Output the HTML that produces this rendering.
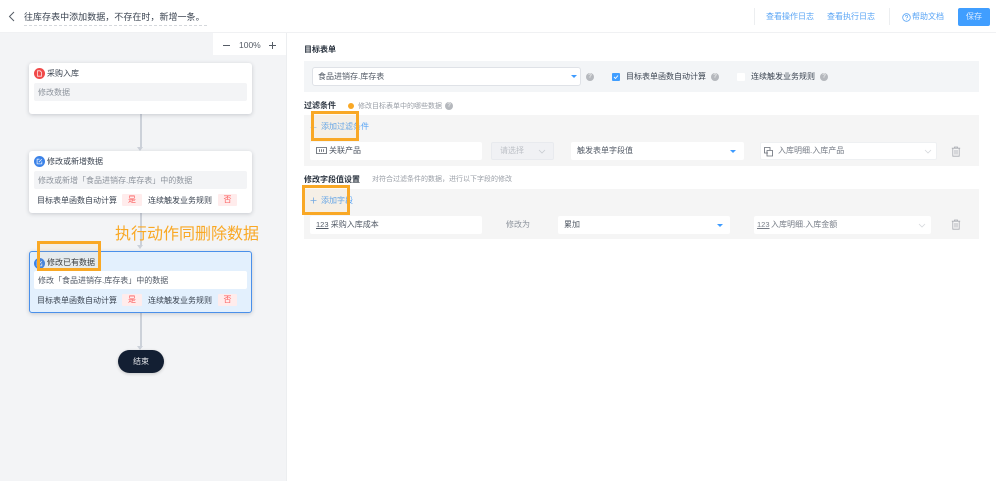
<!DOCTYPE html>
<html><head><meta charset="utf-8">
<style>
html,body{margin:0;padding:0;width:996px;height:481px;overflow:hidden;background:#fff;font-family:"Liberation Sans","Noto Sans CJK SC",sans-serif;color:#1f2d3d}
#w{position:absolute;left:0;top:0;width:996px;height:481px;overflow:hidden;filter:blur(.35px)}
.a{position:absolute;white-space:nowrap}
.t{font-size:8px;line-height:12px}
.card{position:absolute;left:29px;width:223px;background:#fff;border-radius:3px;box-shadow:0 1px 4px rgba(40,50,70,.22)}
.sub{position:absolute;left:5px;height:18px;padding-left:4px;width:209px;background:#f3f4f6;border-radius:2px;font-size:8px;line-height:20px;color:#8d939c;white-space:nowrap}
.ico{position:absolute;left:5px;top:5px;width:11px;height:11px;border-radius:50%}
.panel{position:absolute;left:304px;width:675px;background:#f5f5f5}
.f{position:absolute;background:#fff;border-radius:2px;height:18px;font-size:8px;line-height:18px;white-space:nowrap;color:#525a66;box-sizing:border-box}
.box{position:absolute;border:3px solid #f9a825;box-sizing:border-box;background:rgba(249,168,37,.07)}
.tag{position:absolute;height:12px;background:#ffecec;color:#fb5a5a;font-size:8px;line-height:12px;text-align:center;border-radius:1px}
.line{position:absolute;left:140px;width:1.5px;background:#ccd1d9}
.arr{position:absolute;left:137px;width:0;height:0;border-left:3.5px solid transparent;border-right:3.5px solid transparent;border-top:4px solid #ccd1d9}
.q{position:absolute;width:8px;height:8px;border-radius:50%;background:#b5b8bd;color:#fff;font-size:6px;line-height:8px;text-align:center}
.car{position:absolute;width:0;height:0;border-left:3px solid transparent;border-right:3px solid transparent;border-top:3.5px solid #3d9bff}
</style></head><body><div id="w">
<!-- Header -->
<div class="a" style="left:0;top:0;width:996px;height:33px;border-bottom:1px solid #f0f1f3;box-sizing:border-box"></div>
<svg class="a" style="left:7px;top:11px" width="9" height="11" viewBox="0 0 9 11"><path d="M7 1 L2.5 5.5 L7 10" fill="none" stroke="#555c66" stroke-width="1"/></svg>
<div class="a" style="left:24px;top:10px;font-size:9px;line-height:15px;color:#3a4350;border-bottom:1px dashed #d5d8dc;height:15px;width:183px;letter-spacing:.03px">往库存表中添加数据，不存在时，新增一条。</div>
<div class="a" style="left:754px;top:8px;width:1px;height:17px;background:#eceef0"></div>
<div class="a t" style="left:766px;top:11px;color:#5aa5f5">查看操作日志</div>
<div class="a t" style="left:827px;top:11px;color:#5aa5f5">查看执行日志</div>
<div class="a" style="left:889px;top:8px;width:1px;height:17px;background:#eceef0"></div>
<svg class="a" style="left:902px;top:13px" width="9" height="9" viewBox="0 0 9 9"><circle cx="4.5" cy="4.5" r="3.8" fill="none" stroke="#5aa5f5" stroke-width=".8"/><path d="M3.3 3.6a1.2 1.2 0 1 1 1.6 1.1c-.3.1-.4.3-.4.7M4.5 6.2v.7" fill="none" stroke="#5aa5f5" stroke-width=".7"/></svg>
<div class="a t" style="left:912px;top:11px;color:#5aa5f5">帮助文档</div>
<div class="a" style="left:958px;top:8px;width:32px;height:18px;background:#409eff;color:#dcecff;border-radius:2px;font-size:8px;line-height:18px;text-align:center">保存</div>

<!-- Left panel -->
<div class="a" style="left:0;top:33px;width:287px;height:448px;background:#f3f4f6;border-right:1px solid #eceef0;box-sizing:border-box"></div>
<div class="a" style="left:213px;top:33px;width:73px;height:22px;background:#fff"></div>
<div class="a" style="left:223px;top:44.5px;width:7px;height:1.2px;background:#555c66"></div>
<div class="a" style="left:239px;top:39px;font-size:8.5px;line-height:12px;color:#555c66">100%</div>
<div class="a" style="left:269px;top:44.5px;width:7px;height:1.2px;background:#555c66"></div>
<div class="a" style="left:272px;top:42px;width:1.2px;height:6.5px;background:#555c66"></div>

<div class="line" style="top:114px;height:34px"></div><div class="arr" style="top:147px"></div>
<div class="line" style="top:213px;height:32px"></div><div class="arr" style="top:245px"></div>
<div class="line" style="top:312px;height:35px"></div><div class="arr" style="top:346px"></div>

<div class="card" style="top:63px;height:51px">
  <div class="ico" style="background:#f04a4a"></div>
  <svg class="a" style="left:7px;top:7px" width="7" height="7" viewBox="0 0 7 7"><path d="M1.5.8h2.6L5.5 2.2v4h-4z" fill="none" stroke="#fde3e3" stroke-width=".8"/></svg>
  <div class="a t" style="left:18px;top:5px;color:#3a4350">采购入库</div>
  <div class="sub" style="top:20px">修改数据</div>
</div>
<div class="card" style="top:151px;height:62px">
  <div class="ico" style="background:#3b82e8"></div>
  <svg class="a" style="left:7px;top:7px" width="7" height="7" viewBox="0 0 7 7"><path d="M5.8 3.5v2.4H1.1V1.2h2.4M2.8 4.2L5.8 1.1" fill="none" stroke="#e3eefc" stroke-width=".8"/></svg>
  <div class="a t" style="left:18px;top:5px;color:#3a4350">修改或新增数据</div>
  <div class="sub" style="top:20px">修改或新增「食品进销存.库存表」中的数据</div>
  <div class="a t" style="left:8px;top:44px;color:#3a4350">目标表单函数自动计算</div>
  <div class="tag" style="left:93px;top:43px;width:20px">是</div>
  <div class="a t" style="left:119px;top:44px;color:#3a4350">连续触发业务规则</div>
  <div class="tag" style="left:189px;top:43px;width:19px">否</div>
</div>
<div class="card" style="top:251px;height:62px;background:#e3f0fd;border:1px solid #4a90ea;box-sizing:border-box;left:29px">
  <div class="ico" style="background:#3b82e8;left:4px;top:6px"></div>
  <svg class="a" style="left:6px;top:8px" width="7" height="7" viewBox="0 0 7 7"><path d="M5.8 3.5v2.4H1.1V1.2h2.4M2.8 4.2L5.8 1.1" fill="none" stroke="#e3eefc" stroke-width=".8"/></svg>
  <div class="a t" style="left:17px;top:5px;color:#2b3440">修改已有数据</div>
  <div class="sub" style="top:19px;left:4px;background:#fff;color:#525a66">修改「食品进销存.库存表」中的数据</div>
  <div class="a t" style="left:7px;top:43px;color:#3a4350">目标表单函数自动计算</div>
  <div class="tag" style="left:92px;top:42px;width:20px">是</div>
  <div class="a t" style="left:118px;top:43px;color:#3a4350">连续触发业务规则</div>
  <div class="tag" style="left:188px;top:42px;width:19px">否</div>
</div>
<div class="a" style="left:118px;top:350px;width:46px;height:23px;background:#131f33;border-radius:12px;color:#e4e6ea;font-size:8px;line-height:23px;text-align:center;box-shadow:0 1px 3px rgba(0,0,0,.2)">结束</div>
<div class="a" style="left:115px;top:225px;font-size:16px;line-height:19px;color:#f9a825">执行动作同删除数据</div>

<!-- Right: 目标表单 -->
<div class="a t" style="left:304px;top:44px;color:#2b3440;font-weight:bold">目标表单</div>
<div class="panel" style="top:61px;height:31px;background:#f3f5f7"></div>
<div class="f" style="left:312px;top:67px;width:269px;height:19px;border:1px solid #dfe2e7;padding-left:5px;line-height:17px;border-radius:3px">食品进销存.库存表</div>
<div class="car" style="left:571px;top:75px"></div>
<div class="q" style="left:586px;top:73px">?</div>
<div class="a" style="left:612px;top:73px;width:8px;height:8px;background:#409eff;border-radius:1px"></div>
<svg class="a" style="left:612px;top:73px" width="8" height="8" viewBox="0 0 8 8"><path d="M2 4l1.5 1.5L6 2.5" fill="none" stroke="#fff" stroke-width=".9"/></svg>
<div class="a t" style="left:626px;top:71px;color:#3a4350">目标表单函数自动计算</div>
<div class="q" style="left:711px;top:73px">?</div>
<div class="a" style="left:737px;top:73px;width:8px;height:8px;background:#fff;border-radius:1px"></div>
<div class="a t" style="left:751px;top:71px;color:#3a4350">连续触发业务规则</div>
<div class="q" style="left:820px;top:73px">?</div>

<!-- 过滤条件 -->
<div class="a t" style="left:304px;top:100px;color:#2b3440;font-weight:bold">过滤条件</div>
<div class="a" style="left:348px;top:103px;width:6px;height:6px;border-radius:50%;background:#f9a825"></div>
<div class="a" style="left:358px;top:101px;font-size:7px;line-height:11px;color:#9a9fa7">修改目标表单中的哪些数据</div>
<div class="q" style="left:445px;top:102px">?</div>
<div class="panel" style="top:115px;height:51px"></div>
<svg class="a" style="left:310px;top:124px" width="7" height="7" viewBox="0 0 7 7"><path d="M3.5.5v6M.5 3.5h6" stroke="#9cc5f3" stroke-width=".8" fill="none"/></svg>
<div class="a t" style="left:321px;top:121px;color:#5aa5f5">添加过滤条件</div>
<div class="f" style="left:310px;top:142px;width:172px;padding-left:19px">关联产品</div>
<svg class="a" style="left:316px;top:147px" width="11" height="7" viewBox="0 0 11 7"><path d="M.5.5h10v6H.5zM3.5 2.3v2.6M5.5 2.3v2.6M7.5 2.3v2.6" fill="none" stroke="#555c66" stroke-width=".8"/></svg>
<div class="f" style="left:491px;top:142px;width:63px;background:#f0f1f4;border:1px solid #e8eaee;padding-left:8px;line-height:16px;color:#bcc0c6">请选择</div>
<svg class="a" style="left:538px;top:149px" width="8" height="5" viewBox="0 0 8 5"><path d="M1 1l3 3 3-3" fill="none" stroke="#c8ccd2" stroke-width=".8"/></svg>
<div class="f" style="left:571px;top:142px;width:173px;padding-left:6px">触发表单字段值</div>
<div class="car" style="left:730px;top:150px"></div>
<div class="f" style="left:760px;top:142px;width:177px;height:18px;padding-left:17px;color:#777d87;border:1px solid #eef0f2;line-height:16px">入库明细.入库产品</div>
<svg class="a" style="left:763px;top:146px" width="11" height="11" viewBox="0 0 11 11"><path d="M5 7H1.5V1.5H7V4M4 4.5h5.5v5.5H4z" fill="none" stroke="#666c76" stroke-width=".8"/></svg>
<svg class="a" style="left:924px;top:149px" width="8" height="5" viewBox="0 0 8 5"><path d="M1 1l3 3 3-3" fill="none" stroke="#d5d8dc" stroke-width=".8"/></svg>
<svg class="a" style="left:951px;top:146px" width="10" height="11" viewBox="0 0 10 11"><path d="M.8 2.2h8.4M3.5 2.2V1h3v1.2M1.8 2.2v8h6.4v-8M4 4v4.5M6 4v4.5" fill="none" stroke="#a8abb1" stroke-width=".8"/></svg>

<!-- 修改字段值设置 -->
<div class="a t" style="left:304px;top:174px;color:#2b3440;font-weight:bold">修改字段值设置</div>
<div class="a" style="left:372px;top:174px;font-size:7px;line-height:11px;color:#9a9fa7">对符合过滤条件的数据，进行以下字段的修改</div>
<div class="panel" style="top:189px;height:50px"></div>
<svg class="a" style="left:310px;top:197px" width="7" height="7" viewBox="0 0 7 7"><path d="M3.5.5v6M.5 3.5h6" stroke="#6aaaf0" stroke-width=".8" fill="none"/></svg>
<div class="a t" style="left:321px;top:195px;color:#5aa5f5">添加字段</div>
<div class="f" style="left:310px;top:216px;width:172px;padding-left:6px"><span style="text-decoration:underline;font-size:7.5px">123</span> 采购入库成本</div>
<div class="a t" style="left:506px;top:219px;color:#8d939c">修改为</div>
<div class="f" style="left:558px;top:216px;width:172px;padding-left:6px">累加</div>
<div class="car" style="left:717px;top:224px"></div>
<div class="f" style="left:754px;top:216px;width:177px;height:18px;padding-left:3px;color:#777d87"><span style="text-decoration:underline;font-size:7.5px">123</span><span style="position:absolute;left:17px;top:0">入库明细.入库金额</span></div>
<svg class="a" style="left:918px;top:223px" width="8" height="5" viewBox="0 0 8 5"><path d="M1 1l3 3 3-3" fill="none" stroke="#d5d8dc" stroke-width=".8"/></svg>
<svg class="a" style="left:951px;top:219px" width="10" height="11" viewBox="0 0 10 11"><path d="M.8 2.2h8.4M3.5 2.2V1h3v1.2M1.8 2.2v8h6.4v-8M4 4v4.5M6 4v4.5" fill="none" stroke="#a8abb1" stroke-width=".8"/></svg>

<!-- Orange highlight boxes -->
<div class="box" style="left:37px;top:241px;width:64px;height:30px"></div>
<div class="box" style="left:311px;top:111px;width:48px;height:30px"></div>
<div class="box" style="left:302px;top:185px;width:48px;height:30px"></div>
</div></body></html>
